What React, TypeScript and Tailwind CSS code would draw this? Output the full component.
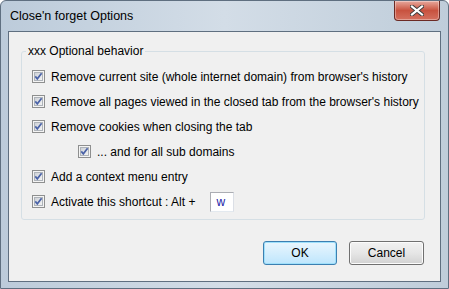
import React from "react";

const options = [
  { label: "Remove current site (whole internet domain) from browser's history", indent: false },
  { label: "Remove all pages viewed in the closed tab from the browser's history", indent: false },
  { label: "Remove cookies when closing the tab", indent: false },
  { label: "... and for all sub domains", indent: true },
  { label: "Add a context menu entry", indent: false },
];

function Check() {
  // win7 style checkbox, always ticked here
  return (
    <svg width="13" height="13" viewBox="0 0 13 13" className="shrink-0">
      <defs>
        <linearGradient id="cbfill" x1="0" y1="0" x2="1" y2="1">
          <stop offset="0" stopColor="#cbcfd5" />
          <stop offset="1" stopColor="#f6f6f6" />
        </linearGradient>
      </defs>
      <rect x="0.5" y="0.5" width="12" height="12" fill="#f4f4f4" stroke="#8e8f8f" />
      <rect x="2.5" y="2.5" width="8" height="8" fill="url(#cbfill)" stroke="#aeb3b9" />
      <path d="M3.3 6.4 L5.3 8.8 L9.6 3.2" fill="none" stroke="#4b63a8" strokeWidth="1.7" />
    </svg>
  );
}

function Row({ label, indent, children }: { label: string; indent?: boolean; children?: React.ReactNode }) {
  return (
    <div className={`flex h-[25px] items-center gap-[6px] whitespace-nowrap ${indent ? "pl-[46px]" : ""}`}>
      <Check />
      <span>{label}</span>
      {children}
    </div>
  );
}

export default function App() {
  return (
    <div
      className="flex h-[289px] w-[449px] flex-col overflow-hidden rounded-t-[6px] border border-[#5f6f80] bg-gradient-to-r from-[#bccbda] via-[#d3dde7] to-[#bfcdda] text-[12px] text-black"
      style={{ fontFamily: '"Liberation Sans", Arial, sans-serif' }}
    >
      {/* title bar */}
      <div className="flex h-[30px] shrink-0 items-start justify-between">
        <div className="pl-[9px] pt-[7px] text-[12.5px] leading-[16px]">Close'n forget Options</div>
        <div className="mr-[8px] flex h-[20px] w-[46px] items-center justify-center rounded-b-[4px] border border-t-0 border-[#6b2a24] bg-gradient-to-b from-[#e6a89d] via-[#c8523f] to-[#d4705f] shadow-[inset_0_0_0_1px_rgba(255,255,255,0.35)]">
          <svg width="14" height="11" viewBox="0 0 14 11">
            <path d="M2 1.5 L12 9.5 M12 1.5 L2 9.5" stroke="#3c3c3c" strokeWidth="4" strokeLinecap="square" />
            <path d="M2 1.5 L12 9.5 M12 1.5 L2 9.5" stroke="#ffffff" strokeWidth="2.2" strokeLinecap="square" />
          </svg>
        </div>
      </div>

      {/* client area */}
      <div className="mx-[7px] mb-[6px] flex flex-1 flex-col border border-[#5f6f80] bg-[#f0f0f0]">
        <fieldset className="ml-[12px] mr-[15px] mt-[11px] rounded-[3px] border border-[#d5dfe5] pb-[5px] pl-[10px] pt-[5px]">
          <legend className="ml-[-6px] px-[2px] leading-[16px]">xxx Optional behavior</legend>
          {options.map((o) => (
            <Row key={o.label} label={o.label} indent={o.indent} />
          ))}
          <Row label="Activate this shortcut : Alt +">
            <div className="ml-[9px] flex h-[20px] w-[24px] items-center border border-[#abadb3] border-b-[#e3e9ef] border-r-[#dbdfe6] bg-white pl-[5px] text-[#1a1aa6]">
              w
            </div>
          </Row>
        </fieldset>

        <div className="mt-auto flex justify-end gap-[12px] pb-[16px] pr-[16px]">
          <button className="h-[24px] w-[74px] rounded-[3px] border border-[#3c7fb1] bg-gradient-to-b from-[#eaf6fd] to-[#bee6fd] shadow-[inset_0_0_0_1px_#9fe0fb]">
            OK
          </button>
          <button className="h-[24px] w-[75px] rounded-[3px] border border-[#707070] bg-gradient-to-b from-[#f2f2f2] via-[#e6e6e6] to-[#d2d2d2] shadow-[inset_0_0_0_1px_#fcfcfc]">
            Cancel
          </button>
        </div>
      </div>
    </div>
  );
}
